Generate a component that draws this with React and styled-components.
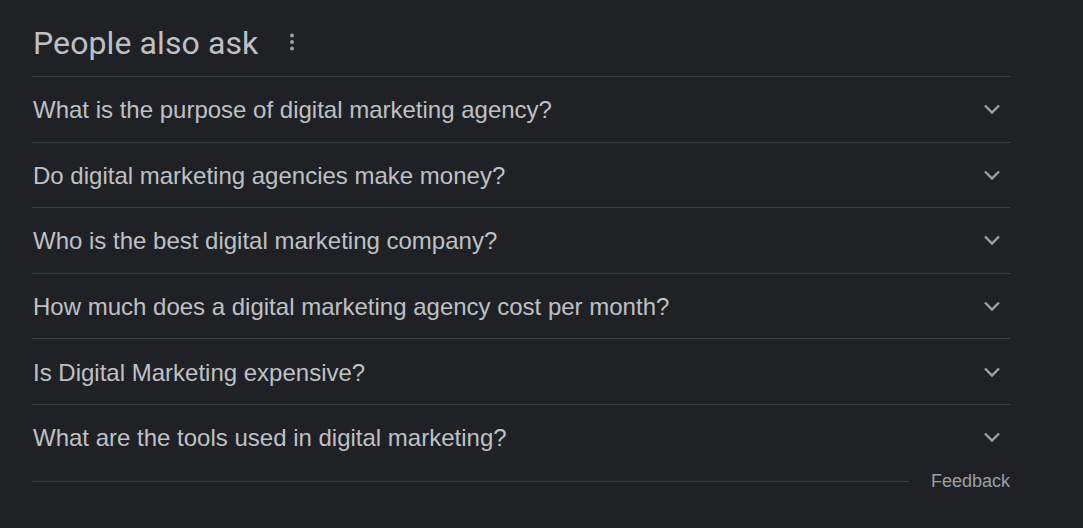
import React from "react";
import styled, { createGlobalStyle } from "styled-components";

const questions = [
  "What is the purpose of digital marketing agency?",
  "Do digital marketing agencies make money?",
  "Who is the best digital marketing company?",
  "How much does a digital marketing agency cost per month?",
  "Is Digital Marketing expensive?",
  "What are the tools used in digital marketing?",
];

const GlobalStyle = createGlobalStyle`
  html, body {
    margin: 0;
    background: #202124;
  }
  body {
    font-family: "Liberation Sans", Arial, sans-serif;
  }
`;

const Page = styled.div`
  width: 1083px;
  height: 528px;
  background: #202124;
  padding: 22px 0 0 32px;
  box-sizing: border-box;
`;

const Panel = styled.div`
  width: 978px;
`;

const Header = styled.div`
  display: flex;
  align-items: center;
  height: 54px;
  border-bottom: 1px solid #3c4043;
`;

const Title = styled.h2`
  margin: 0 0 13px 1px;
  font-family: Roboto, "Open Sans", sans-serif;
  font-weight: 400;
  font-size: 32px;
  letter-spacing: 0.1px;
  color: #bdc1c6;
`;

const MenuButton = styled.span`
  display: flex;
  margin-left: 31px;
  margin-bottom: 14px;
  color: #9aa0a6;
`;

const Row = styled.div`
  display: flex;
  align-items: center;
  justify-content: space-between;
  height: 64.6px;
  border-bottom: 1px solid ${(p) => (p.last ? "transparent" : "#3c4043")};
  cursor: pointer;
`;

const Question = styled.span`
  margin: 2px 0 0 1px;
  font-size: 24px;
  color: #bdc1c6;
`;

const Chevron = styled.span`
  display: flex;
  margin: 0 9px 0 0;
  color: #9aa0a6;
`;

const Footer = styled.div`
  display: flex;
  align-items: flex-start;
`;

const FooterLine = styled.div`
  flex: 1;
  height: 1px;
  background: #3c4043;
  margin-top: 10px;
`;

const Feedback = styled.span`
  margin-left: 22px;
  font-size: 18px;
  line-height: 21px;
  color: #9aa0a6;
`;

function DotsIcon() {
  return (
    <svg width="6" height="18" viewBox="0 0 6 18" fill="currentColor">
      <circle cx="3" cy="2.5" r="2" />
      <circle cx="3" cy="9" r="2" />
      <circle cx="3" cy="15.5" r="2" />
    </svg>
  );
}

function ChevronIcon() {
  return (
    <svg width="18" height="12" viewBox="0 0 18 12" fill="none">
      <path d="M2 2.5 L9 9.5 L16 2.5" stroke="currentColor" strokeWidth="2.4" />
    </svg>
  );
}

export default function App() {
  return (
    <>
      <GlobalStyle />
      <Page>
        <Panel>
          <Header>
            <Title>People also ask</Title>
            <MenuButton>
              <DotsIcon />
            </MenuButton>
          </Header>
          {questions.map((q, i) => (
            <Row key={q} last={i === questions.length - 1}>
              <Question>{q}</Question>
              <Chevron>
                <ChevronIcon />
              </Chevron>
            </Row>
          ))}
          <Footer>
            <FooterLine />
            <Feedback>Feedback</Feedback>
          </Footer>
        </Panel>
      </Page>
    </>
  );
}
